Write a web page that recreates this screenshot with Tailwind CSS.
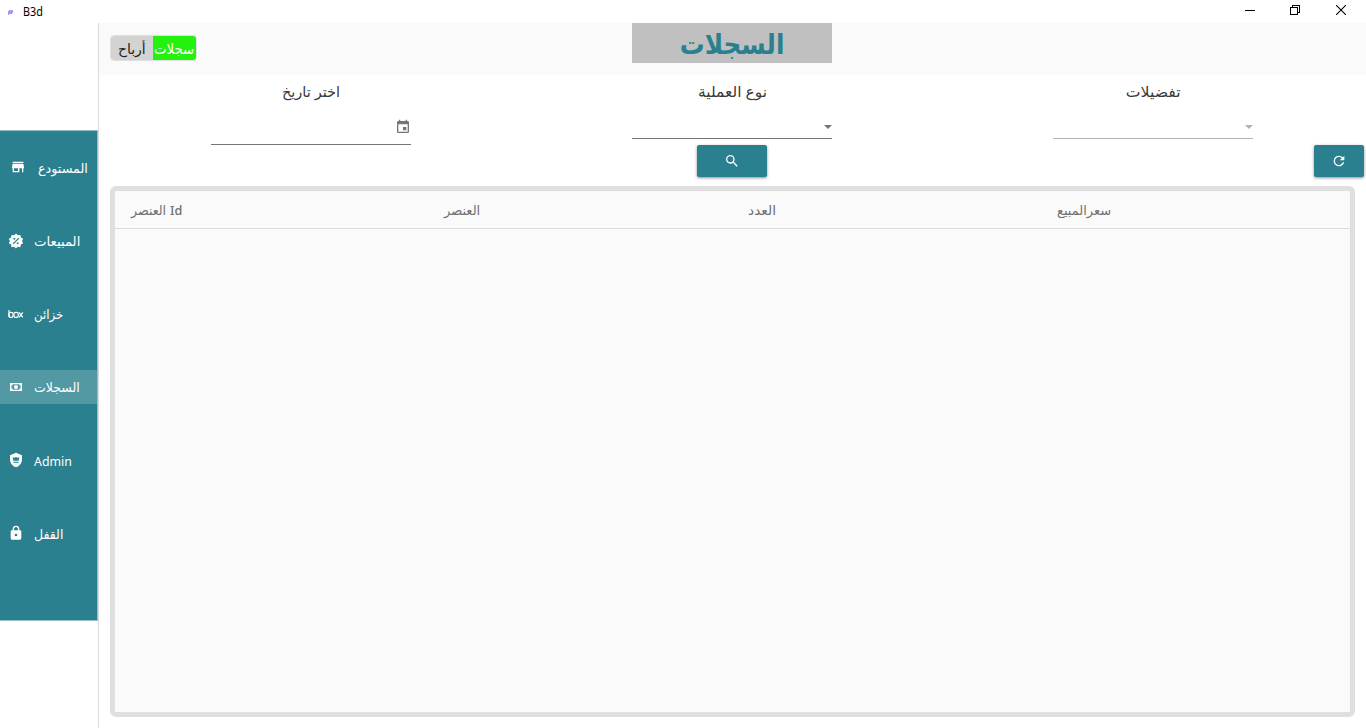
<!DOCTYPE html>
<html lang="ar">
<head>
<meta charset="utf-8">
<title>B3d</title>
<script src="https://cdn.jsdelivr.net/npm/@tailwindcss/browser@4"></script>
</head>
<body class="h-[728px] w-[1366px] overflow-hidden bg-white font-['Noto_Sans','DejaVu_Sans',sans-serif] text-[#3a3a3a]">
<div class="flex h-full flex-col">
  <header class="flex h-[23px] shrink-0 items-start justify-between text-black">
    <div class="flex h-[23px] items-center pl-[8px]">
      <svg class="h-[6px] w-[5px]" viewBox="0 0 5 6"><path fill="#9a9ce8" d="M0 2h1V1h4v3H4v1H1v1H0z"/><path stroke="#b9bbf3" stroke-width=".6" d="M1 4l3-3"/></svg>
      <span class="ml-[10px] text-[12px] leading-[23px]"><span class="inline-block origin-left scale-x-[0.9]">B3d</span></span>
    </div>
    <div class="flex pt-[5px] pr-[20px]">
      <svg class="mr-[35px] size-[10px]" viewBox="0 0 10 10" shape-rendering="crispEdges"><path fill="#000" d="M0 5h10v1H0z"/></svg>
      <svg class="mr-[36px] size-[10px]" viewBox="0 0 10 10" fill="none" stroke="#000" shape-rendering="crispEdges"><path d="M.5 2.5h7v7h-7zM2.5 2.5v-2h7v7h-2"/></svg>
      <svg class="size-[10px]" viewBox="0 0 10 10" fill="none" stroke="#000" stroke-width="1.1"><path d="M0 0l10 10M10 0L0 10"/></svg>
    </div>
  </header>
  <div class="flex min-h-0 grow">
    <aside class="w-[99px] shrink-0 border-r border-[#dadada] pt-[107px]">
      <nav class="flex h-[491px] w-[98px] flex-col gap-[39.2px] border-t border-r border-b border-[#93c0c7] bg-[#2a808e] pt-[19.4px] text-[13px] text-white">
        <a class="flex h-[34px] w-[97px] shrink-0 items-center"><svg class="ml-[10px] size-[16px] shrink-0" viewBox="0 0 24 24" fill="currentColor"><path d="M20 4H4v2h16V4zm1 10v-2l-1-5H4l-1 5v2h1v6h10v-6h4v6h2v-6h1zm-9 4H6v-4h6v4z"/></svg><span class="ml-[12px] origin-left scale-x-[0.98] pt-[2px]" dir="rtl">المستودع</span></a>
        <a class="flex h-[34px] w-[97px] shrink-0 items-center"><svg class="ml-[8px] size-[16px] shrink-0" viewBox="0 0 24 24" fill="currentColor"><path d="M18.65 2.85l.61 3.86L22.77 8.5 21 12l1.78 3.5-3.54 1.77-.6 3.93-3.9-.61-2.77 2.79-2.8-2.83-3.9.64-.62-3.93-3.5-1.79L2.94 11.97 1.17 8.5l3.51-1.79.61-3.86 3.87.61L12 .69l2.78 2.77zM9.5 7a1.5 1.5 0 1 0 0 3 1.5 1.5 0 0 0 0-3m5 7a1.5 1.5 0 1 0 0 3 1.5 1.5 0 0 0 0-3M8.41 17L17 8.41 15.59 7 7 15.59z"/></svg><span class="ml-[10px] origin-left scale-x-[1.02] pt-[2px]" dir="rtl">المبيعات</span></a>
        <a class="flex h-[34px] w-[97px] shrink-0 items-center"><svg class="ml-[8px] h-[8px] w-[16px] shrink-0" viewBox="0 0 16 8" fill="none" stroke="currentColor" stroke-width="1.2"><path d="M1 0v7M11 2.3l3.8 5M14.8 2.3l-3.8 5"/><rect x="1" y="2.4" width="4" height="4.9" rx="1.6"/><rect x="6" y="2.4" width="4.2" height="4.9" rx="1.6"/></svg><span class="ml-[10px] origin-left scale-x-[0.91] pt-[2px]" dir="rtl">خزائن</span></a>
        <a class="flex h-[34px] w-[97px] shrink-0 items-center bg-[#5299a4]"><svg class="ml-[8px] size-[16px] shrink-0" viewBox="0 0 24 24" fill="currentColor"><path fill-rule="evenodd" d="M3 6h18v12H3zM7 8a2 2 0 0 1-2 2v4a2 2 0 0 1 2 2h10a2 2 0 0 1 2-2v-4a2 2 0 0 1-2-2zM12 9a3 3 0 1 1 0 6 3 3 0 0 1 0-6"/></svg><span class="ml-[10px] origin-left scale-x-[0.96] pt-[2px]" dir="rtl">السجلات</span></a>
        <a class="flex h-[34px] w-[97px] shrink-0 items-center"><svg class="ml-[8px] size-[16px] shrink-0" viewBox="0 0 24 24" fill="currentColor"><path d="M12 1L3 5v6c0 5.55 3.84 10.74 9 12 5.16-1.26 9-6.45 9-12V5zm4 15H8v-1.5h8zm0-3H8L7 7l2.67 2L12 7l2.33 2L17 7z"/></svg><span class="ml-[10px] origin-left scale-x-[0.95] pt-[3px]">Admin</span></a>
        <a class="flex h-[34px] w-[97px] shrink-0 items-center"><svg class="ml-[8px] size-[16px] shrink-0" viewBox="0 0 24 24" fill="currentColor"><path d="M12 17a2 2 0 1 0 0-4 2 2 0 0 0 0 4m6-9a2 2 0 0 1 2 2v10a2 2 0 0 1-2 2H6a2 2 0 0 1-2-2V10a2 2 0 0 1 2-2h1V6a5 5 0 0 1 10 0v2zm-6-5a3 3 0 0 0-3 3v2h6V6a3 3 0 0 0-3-3"/></svg><span class="ml-[10px] origin-left scale-x-[0.96] pt-[2px]" dir="rtl">القفل</span></a>
      </nav>
    </aside>
    <main class="flex min-w-0 grow flex-col">
      <div class="grid h-[52px] shrink-0 grid-cols-3 bg-[#fafafa]">
        <div class="pt-[12px] pl-[11px]">
          <div class="flex h-[26px] w-[87px] overflow-hidden rounded-[4px] border border-[#dfdfdf] text-[14px] leading-[26px]">
            <span class="w-[42px] bg-[#d3d3d3] text-center text-[#222]" dir="rtl">أرباح</span><span class="grow bg-[#24f20e] text-white"><span class="ml-[1px] inline-block origin-left scale-x-[0.95]" dir="rtl">سجلات</span></span>
          </div>
        </div>
        <div class="flex justify-center"><h1 class="h-[40px] w-[200px] bg-[#c0c0c0] text-center text-[28px] leading-[41px] font-bold text-[#2a808e]"><span class="inline-block scale-x-[0.885]" dir="rtl">السجلات</span></h1></div>
      </div>
      <div class="grid h-[111px] shrink-0 grid-cols-[421px_421px_1fr] pl-[1.5px] text-[15px] font-medium">
        <section class="flex flex-col items-center pt-[4px]"><span class="h-[24px] scale-x-[0.97] leading-[24px]" dir="rtl">اختر تاريخ</span>
          <div class="flex h-[42px] w-[200px] justify-end border-b border-[#757575] pt-[16px]"><svg class="size-[16px]" viewBox="0 0 24 24" fill="#757575"><path d="M19 19H5V8h14m-3-7v2H8V1H6v2H5a2 2 0 0 0-2 2v14a2 2 0 0 0 2 2h14a2 2 0 0 0 2-2V5a2 2 0 0 0-2-2h-1V1m-1 11h-5v5h5z"/></svg></div>
        </section>
        <section class="flex flex-col items-center pt-[4px]"><span class="h-[24px] scale-x-[1.03] leading-[24px]" dir="rtl">نوع العملية</span>
          <div class="flex h-[36px] w-[200px] justify-end border-b border-[#757575] pt-[22px]"><svg class="h-[4px] w-[8px]" viewBox="0 0 8 4"><path fill="#757575" d="M0 0h8L4 4z"/></svg></div>
          <button class="mt-[6px] flex h-[32px] w-[70px] items-center justify-center rounded-[2px] bg-[#2a808e] shadow-[0_1px_3px_rgba(0,0,0,.45)]"><svg class="size-[16px]" viewBox="0 0 24 24" fill="#fff"><path d="M9.5 3A6.5 6.5 0 0 1 16 9.5c0 1.61-.59 3.09-1.56 4.23l.27.27h.79l5 5-1.5 1.5-5-5v-.79l-.27-.27A6.516 6.516 0 1 1 9.5 3m0 2a4.5 4.5 0 1 0 0 9 4.5 4.5 0 0 0 0-9"/></svg></button>
        </section>
        <section class="flex flex-col pt-[4px]">
          <div class="flex w-[421px] flex-col items-center"><span class="h-[24px] scale-x-[1.05] leading-[24px]" dir="rtl">تفضيلات</span>
          <div class="flex h-[36px] w-[200px] justify-end border-b border-[#b2b2b2] pt-[22px]"><svg class="h-[4px] w-[8px]" viewBox="0 0 8 4"><path fill="#b2b2b2" d="M0 0h8L4 4z"/></svg></div></div>
          <button class="mt-[6px] mr-[2px] flex h-[32px] w-[50px] items-center justify-center self-end rounded-[2px] bg-[#2a808e] shadow-[0_1px_3px_rgba(0,0,0,.45)]"><svg class="size-[16px]" viewBox="0 0 24 24" fill="#fff"><path d="M17.65 6.35A7.96 7.96 0 0 0 12 4a8 8 0 1 0 7.73 10h-2.08A6 6 0 1 1 12 6c1.66 0 3.14.69 4.22 1.78L13 11h7V4z"/></svg></button>
        </section>
      </div>
      <div class="mr-[11px] mb-[11px] ml-[11px] grow rounded-[6px] border-5 border-[#dfdfdf] bg-[#fafafa]">
        <div class="flex h-[38px] items-center border-b border-[#dcdcdc] pt-[2px] pl-[16px] text-[13px] font-medium text-[#707070]">
          <div class="w-[313px]"><span class="inline-flex origin-left scale-x-[0.97] flex-row gap-[4px]"><span dir="rtl">العنصر</span><span>Id</span></span></div>
          <div class="w-[304px]"><span dir="rtl">العنصر</span></div>
          <div class="w-[309px]"><span class="inline-block origin-left scale-x-[1.06]" dir="rtl">العدد</span></div>
          <div><span dir="rtl">سعرالمبيع</span></div>
        </div>
      </div>
    </main>
  </div>
</div>
</body>
</html>
